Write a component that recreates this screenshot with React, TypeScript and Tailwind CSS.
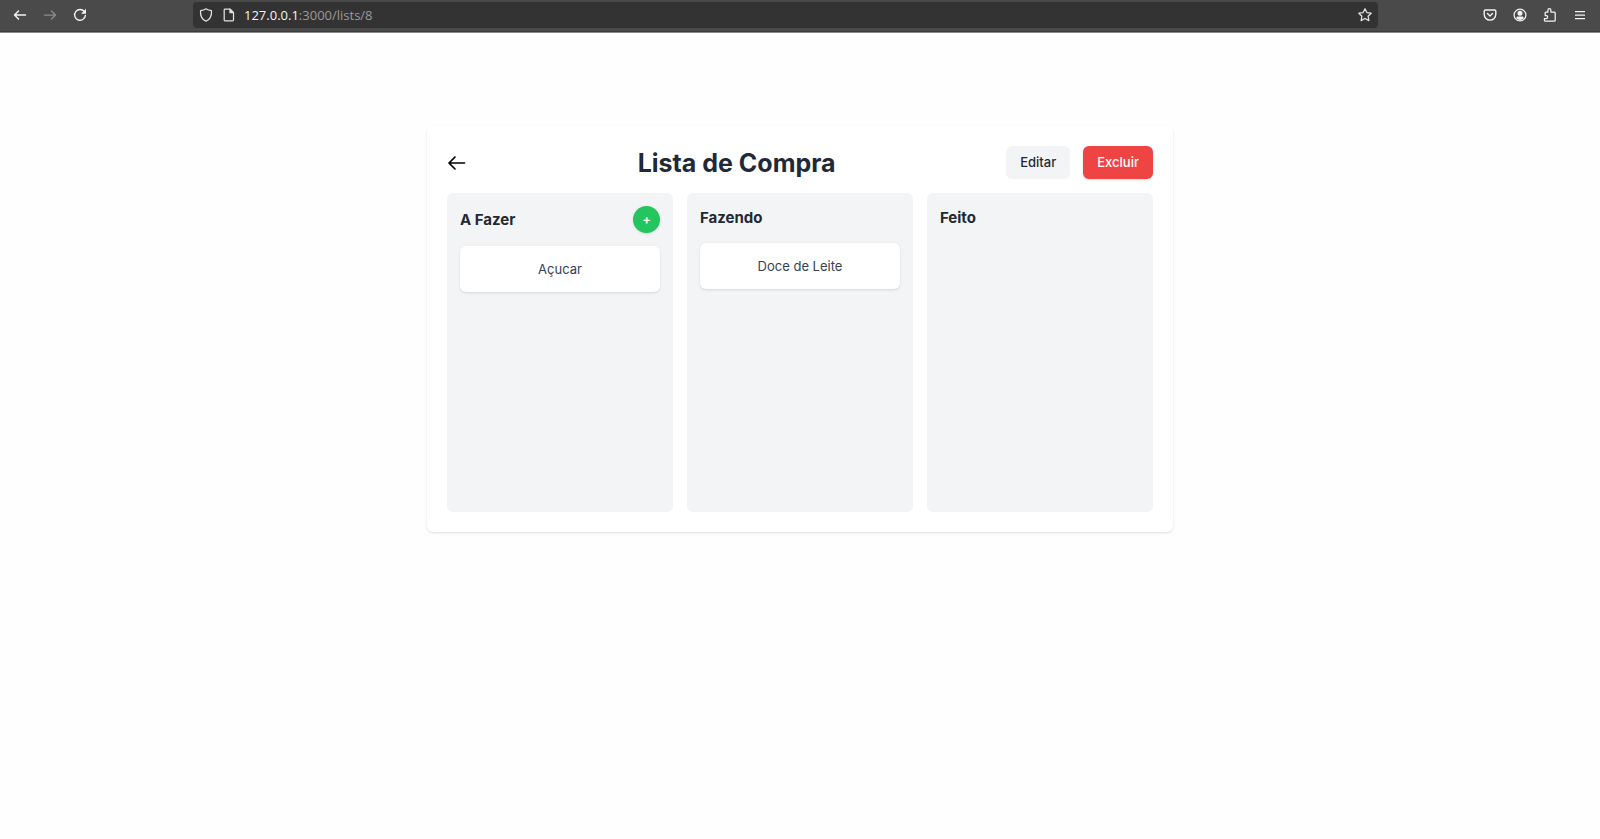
import type { ReactNode } from "react";

function Icon({ children, className = "size-4" }: { children: ReactNode; className?: string }) {
  return (
    <svg
      viewBox="0 0 16 16"
      className={className}
      fill="none"
      stroke="currentColor"
      strokeWidth="1.25"
      strokeLinecap="round"
      strokeLinejoin="round"
      aria-hidden="true"
    >
      {children}
    </svg>
  );
}

function ToolButton({ label, disabled, children }: { label: string; disabled?: boolean; children: ReactNode }) {
  return (
    <button
      type="button"
      aria-label={label}
      disabled={disabled}
      className="flex size-[30px] items-center justify-center text-[#f2f2f2] disabled:text-[#8c8c8c]"
    >
      {children}
    </button>
  );
}

function BrowserBar() {
  return (
    <header className="border-b border-[#8a8a8a] bg-[#4a4a4a]">
      <div className="flex items-center border-b border-[#3c3c3c] px-[5px] pb-px">
        <nav className="flex w-[188px] shrink-0 items-center">
          <ToolButton label="Voltar">
            <Icon>
              <path strokeWidth="1.5" d="M2.5 8h11M6.5 4l-4 4 4 4" />
            </Icon>
          </ToolButton>
          <ToolButton label="Avançar" disabled>
            <Icon>
              <path d="M2.5 8h11M9.5 4l4 4-4 4" />
            </Icon>
          </ToolButton>
          <ToolButton label="Recarregar">
            <Icon>
              <path strokeWidth="1.4" d="M12.6 5A5.4 5.4 0 1 0 13.4 8.4" />
              <path fill="currentColor" stroke="none" d="M14 1.8v4.4a.6.6 0 0 1-.6.6H9z" />
            </Icon>
          </ToolButton>
        </nav>
        <div className="flex h-[26px] flex-1 items-center rounded bg-[#333333] px-[5px] text-[#e2e2e2]">
          <Icon>
            <path d="M8 1.8c1.5 1.2 3.3 1.7 5.5 1.9.3 4.8-1.2 8.6-5.5 10.6C3.7 12.3 2.2 8.5 2.5 3.7 4.700 3.500 6.500 3 8 1.800z" />
          </Icon>
          <Icon className="ml-[7px] size-4">
            <path d="M4 2.200h5l3.500 3.500v7.400a.8.8 0 0 1-.8.8H4a.8.8 0 0 1-.8-.8V3a.8.8 0 0 1 .8-.8z" />
            <path fill="currentColor" d="M9 2.200v3.500h3.500z" />
          </Icon>
          <p className="ml-[7px] flex-1 font-['Open_Sans','Noto_Sans',sans-serif] text-[13px] leading-4 text-[#9a9a9a]">
            <span className="text-[#f4f4f4]">127.0.0.1</span>:3000/lists/8
          </p>
          <button type="button" aria-label="Adicionar aos favoritos">
            <Icon>
              <path d="M8 1.700l1.900 3.900 4.300.6-3.100 3 .8 4.400L8 11.500l-3.900 2.100.8-4.400-3.100-3 4.300-.6z" />
            </Icon>
          </button>
        </div>
        <div className="flex w-[217px] shrink-0 items-center justify-end">
          <ToolButton label="Pocket">
            <Icon>
              <path strokeWidth="1.4" d="M3.500 3h9a1.300 1.300 0 0 1 1.300 1.300v3a5.800 5.800 0 0 1-11.600 0v-3A1.300 1.300 0 0 1 3.500 3zM5.500 6.500 8 8.900l2.500-2.400" />
            </Icon>
          </ToolButton>
          <ToolButton label="Conta">
            <Icon>
              <circle cx="8" cy="8" r="5.900" />
              <circle cx="8" cy="6.300" r="1.900" fill="currentColor" />
              <path fill="currentColor" stroke="none" d="M4.200 11.200c.2-1.300 1-1.700 2-1.700h3.600c1 0 1.800.4 2 1.700A5 5 0 0 1 8 12.900a5 5 0 0 1-3.800-1.700z" />
            </Icon>
          </ToolButton>
          <ToolButton label="Extensões">
            <Icon>
              <path d="M5.900 5V3.200a1.500 1.500 0 0 1 3 0V5h3.300a1 1 0 0 1 1 1v7.200a1 1 0 0 1-1 1H3.400a1 1 0 0 1-1-1v-1.700h1.900a1.400 1.400 0 0 0 0-2.800H3.200V6a1 1 0 0 1 1-1z" />
            </Icon>
          </ToolButton>
          <ToolButton label="Menu">
            <Icon>
              <path strokeLinecap="butt" d="M3 4.500h10M3 8h10M3 11.500h10" />
            </Icon>
          </ToolButton>
        </div>
      </div>
    </header>
  );
}

function Column({ title, items, canAdd }: { title: string; items: string[]; canAdd?: boolean }) {
  return (
    <section className="min-h-[319px] rounded-md bg-[#f3f4f6] p-[13px]">
      <div className="mb-[13px] flex items-center justify-between">
        <h2 className="text-[15px] leading-6 font-bold text-[#1f2937]">{title}</h2>
        {canAdd && (
          <button
            type="button"
            aria-label="Adicionar item"
            className="flex size-[27px] items-center justify-center rounded-full bg-[#22c55e] text-[13px] font-semibold text-white shadow-sm"
          >
            +
          </button>
        )}
      </div>
      <ul className="flex flex-col gap-3">
        {items.map((item) => (
          <li
            key={item}
            className="rounded-md bg-white p-[13px] text-center text-[13px] leading-5 text-[#374151] shadow-sm"
          >
            {item}
          </li>
        ))}
      </ul>
    </section>
  );
}

export default function App() {
  return (
    <div className="min-h-screen bg-[#fefefe] font-['Inter','Liberation_Sans',sans-serif]">
      <BrowserBar />
      <main className="mx-auto mt-[93px] max-w-[746px] rounded-md bg-white p-5 shadow-sm">
        <div className="mb-[14px] flex items-center justify-between">
          <a href="/lists" aria-label="Voltar para as listas" className="text-black">
            <svg viewBox="0 0 20 20" className="size-5" fill="none" stroke="currentColor" strokeWidth="1.7" strokeLinecap="round" strokeLinejoin="round" aria-hidden="true">
              <path d="M17.500 10H2.500M8 4l-6 6 6 6" />
            </svg>
          </a>
          <h1 className="text-[25px] leading-8 font-bold text-[#1f2937]">Lista de Compra</h1>
          <div className="flex gap-[13px]">
            <button type="button" className="rounded-md bg-[#f3f4f6] px-[14px] py-[6px] text-[13px] leading-[21px] font-medium text-[#1f2937]">
              Editar
            </button>
            <button type="button" className="rounded-md bg-[#ef4444] px-[14px] py-[6px] text-[13px] leading-[21px] font-medium text-white shadow-sm">
              Excluir
            </button>
          </div>
        </div>
        <div className="grid grid-cols-3 gap-[14px]">
          <Column title="A Fazer" items={["Açucar"]} canAdd />
          <Column title="Fazendo" items={["Doce de Leite"]} />
          <Column title="Feito" items={[]} />
        </div>
      </main>
    </div>
  );
}
